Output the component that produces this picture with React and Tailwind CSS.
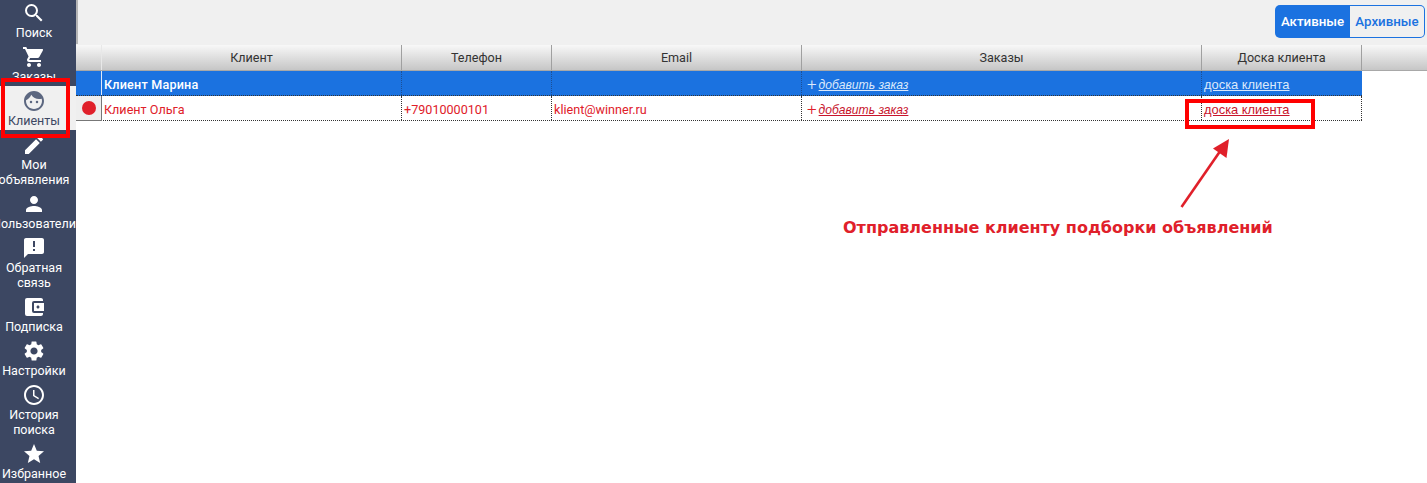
import React from "react";
import {
  MdSearch,
  MdShoppingCart,
  MdFace,
  MdEdit,
  MdPerson,
  MdAnnouncement,
  MdAccountBalanceWallet,
  MdSettings,
  MdAccessTime,
  MdStar,
} from "react-icons/md";

const menu = [
  { icon: MdSearch, label: ["Поиск"] },
  { icon: MdShoppingCart, label: ["Заказы"] },
  { icon: MdFace, label: ["Клиенты"], active: true },
  { icon: MdEdit, label: ["Мои", "объявления"] },
  { icon: MdPerson, label: ["Пользователи"] },
  { icon: MdAnnouncement, label: ["Обратная", "связь"] },
  { icon: MdAccountBalanceWallet, label: ["Подписка"] },
  { icon: MdSettings, label: ["Настройки"] },
  { icon: MdAccessTime, label: ["История", "поиска"] },
  { icon: MdStar, label: ["Избранное"] },
];

const columns = [
  { title: "", width: "w-[26px]" },
  { title: "Клиент", width: "w-[300px]" },
  { title: "Телефон", width: "w-[150px]" },
  { title: "Email", width: "w-[250px]" },
  { title: "Заказы", width: "w-[400px]" },
  { title: "Доска клиента", width: "w-[160px]" },
];

const Sidebar = () => (
  <div className="w-[76px] h-[483px] shrink-0 bg-[#3c4762] overflow-hidden">
    <div className="-mt-[2px] w-[76px]">
      {menu.map((item) => {
        const Icon = item.icon;
        return (
          <div
            key={item.label[0]}
            className={
              "flex flex-col items-center pt-[3px] pb-[2px] pr-[8px] " +
              (item.active ? "bg-[#f0f0f0] text-[#3c4762]" : "text-white")
            }
          >
            <Icon size={24} className={item.active ? "text-[#5c6780]" : ""} />
            {item.label.map((line) => (
              <div key={line} className="text-[12.5px] leading-[15px] whitespace-nowrap">
                {line}
              </div>
            ))}
          </div>
        );
      })}
    </div>
  </div>
);

const OrderLink = ({ plusColor, linkColor }) => (
  <div className="flex items-center pl-[5px]">
    <span className={"text-[17px] font-light leading-none mr-[2px] " + plusColor}>+</span>
    <a className={"italic underline text-[12.1px] font-['Liberation_Sans',sans-serif] " + linkColor}>
      добавить заказ
    </a>
  </div>
);

const BoardLink = ({ color }) => (
  <a className={"pl-[2px] underline text-[12.9px] font-['Liberation_Sans',sans-serif] " + color}>
    доска клиента
  </a>
);

const App = () => (
  <div className="relative flex w-[1427px] h-[483px] overflow-hidden bg-white font-['Roboto',sans-serif] text-[12.6px]">
    <Sidebar />

    <div className="flex-1">
      <div className="h-[45px] bg-[#f0f0f0] flex justify-end pt-[5px] pr-[2px]">
        <div className="flex h-[33px] text-[13.3px] font-medium">
          <div className="w-[75px] flex items-center justify-center bg-[#1b72e0] text-white rounded-l-[5px]">
            Активные
          </div>
          <div className="w-[75px] flex items-center justify-center border border-[#1b72e0] border-l-0 text-[#1b72e0] rounded-r-[5px]">
            Архивные
          </div>
        </div>
      </div>

      <div className="flex h-[26px] bg-gradient-to-b from-[#f8f8f8] to-[#c6c6c6] border-b border-[#a8a8a8] text-[#333]">
        {columns.map((col, i) => (
          <div
            key={i}
            className={
              col.width +
              " flex items-center justify-center pt-[2px] border-r " +
              (i === 0 ? "border-[#e8e8e8]" : "border-[#a0a0a0]")
            }
          >
            {col.title}
          </div>
        ))}
      </div>

      <div className="flex w-[1286px] h-[25px] bg-[#1b72e0] text-white border-b border-dotted border-[#333]">
        <div className="w-[26px] border-r border-[#dfe9f8]"></div>
        <div className="w-[300px] flex items-center pl-[2px] pt-[4px] font-medium tracking-[0.2px] border-r border-dotted border-[#1b4f96]">
          Клиент Марина
        </div>
        <div className="w-[150px] border-r border-dotted border-[#1b4f96]"></div>
        <div className="w-[250px] border-r border-dotted border-[#1b4f96]"></div>
        <div className="w-[400px] flex items-center pt-[4px] border-r border-dotted border-[#1b4f96]">
          <OrderLink plusColor="text-[#dce9fb]" linkColor="text-[#dce9fb]" />
        </div>
        <div className="w-[160px] flex items-center pt-[4px]">
          <BoardLink color="text-[#dce9fb]" />
        </div>
      </div>

      <div className="flex w-[1286px] h-[25px] text-[#e0202a] border-b border-dotted border-[#333]">
        <div className="w-[26px] flex items-center justify-center bg-[#eeeeee] border-r border-b border-[#777] -mb-px">
          <div className="w-[14px] h-[14px] rounded-full bg-[#e0202a]"></div>
        </div>
        <div className="w-[300px] flex items-center pl-[2px] pt-[4px] border-r border-dotted border-[#333]">Клиент Ольга</div>
        <div className="w-[150px] flex items-center pl-[2px] pt-[4px] border-r border-dotted border-[#333]">+79010000101</div>
        <div className="w-[250px] flex items-center pl-[2px] pt-[4px] border-r border-dotted border-[#333]">klient@winner.ru</div>
        <div className="w-[400px] flex items-center pt-[4px] border-r border-dotted border-[#333]">
          <OrderLink plusColor="text-[#e0202a]" linkColor="text-[#c8142c]" />
        </div>
        <div className="w-[160px] flex items-center pt-[4px] border-r border-dotted border-[#333]">
          <BoardLink color="text-[#c8142c]" />
        </div>
      </div>
    </div>

    {/* annotations over the screenshot */}
    <div className="absolute left-[76px] top-0 w-[2px] h-[44px] bg-[#b5b5b5]"></div>
    <div className="absolute left-[1px] top-[78px] w-[69px] h-[60px] border-[4px] border-[#ff0000]"></div>
    <div className="absolute left-[1185px] top-[99px] w-[130px] h-[30px] border-[4px] border-[#ff0000]"></div>
    <svg className="absolute left-[1170px] top-[130px]" width="70" height="85" viewBox="0 0 70 85">
      <path d="M11.5 77 L53 17" stroke="#e0202a" strokeWidth="2.6" fill="none" />
      <path d="M59 9 L56.5 28 L43 18.5 Z" fill="#e0202a" />
    </svg>
    <div className="absolute left-[843px] top-[218px] text-[16px] leading-[20px] font-bold text-[#e0202a] font-['DejaVu_Sans',sans-serif] whitespace-nowrap">
      Отправленные клиенту подборки объявлений
    </div>
  </div>
);

export default App;
